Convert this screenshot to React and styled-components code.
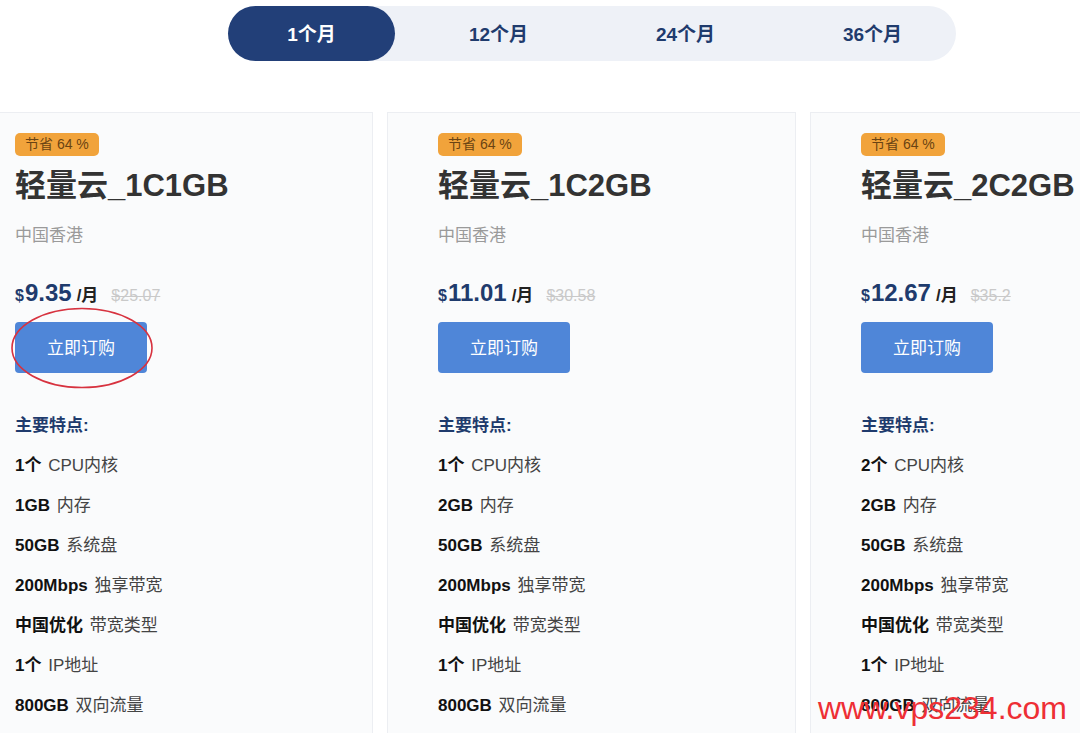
import React from "react";
import styled, { createGlobalStyle } from "styled-components";

const Global = createGlobalStyle`
  html, body { margin: 0; padding: 0; background: #ffffff; }
  body {
    font-family: "Liberation Sans", "Noto Sans CJK SC", sans-serif;
    overflow: hidden;
    width: 1080px;
    height: 733px;
  }
`;

const Page = styled.div`
  position: relative;
  width: 1080px;
  height: 733px;
  overflow: hidden;
  padding-top: 6px;
  box-sizing: border-box;
`;

const TabBar = styled.div`
  margin-left: 228px;
  width: 728px;
  height: 55px;
  border-radius: 28px;
  background: #eef1f7;
  display: flex;
  gap: 20px;
`;

const Tab = styled.div`
  width: 167px;
  height: 55px;
  box-sizing: border-box;
  padding-bottom: 3px;
  border-radius: 28px;
  display: flex;
  align-items: center;
  justify-content: center;
  font-size: 19px;
  font-weight: 700;
  color: ${(p) => (p.$active ? "#ffffff" : "#1f3b6d")};
  background: ${(p) => (p.$active ? "#223f78" : "transparent")};
`;

const CardRow = styled.div`
  margin-top: 51px;
  margin-left: -36px;
  display: flex;
  gap: 14px;
`;

const Card = styled.div`
  flex: 0 0 409px;
  box-sizing: border-box;
  height: 640px;
  background: #fafbfc;
  border: 1px solid #eceef2;
  padding: 20px 0 0 50px;
  display: flex;
  flex-direction: column;
  align-items: flex-start;
`;

const Badge = styled.div`
  height: 23px;
  padding: 0 10px;
  border-radius: 5px;
  background: #f1a33b;
  color: #6a4313;
  font-size: 14px;
  line-height: 23px;
  white-space: nowrap;
`;

const Title = styled.div`
  margin-top: 10px;
  font-size: 31px;
  line-height: 40px;
  font-weight: 700;
  color: #333333;
  white-space: nowrap;
`;

const Region = styled.div`
  margin-top: 18px;
  font-size: 17px;
  line-height: 24px;
  color: #9a9a9a;
`;

const PriceLine = styled.div`
  margin-top: 31px;
  height: 32px;
  display: flex;
  align-items: baseline;
  white-space: nowrap;
`;

const Currency = styled.span`
  font-size: 16px;
  font-weight: 700;
  color: #1f3b6d;
`;

const Amount = styled.span`
  font-size: 24px;
  font-weight: 700;
  color: #1f3b6d;
  margin-left: 1px;
`;

const Unit = styled.span`
  font-size: 17px;
  font-weight: 700;
  color: #222222;
  margin-left: 5px;
`;

const OldPrice = styled.span`
  font-size: 16px;
  color: #c9c9c9;
  text-decoration: line-through;
  margin-left: 13px;
`;

const ButtonWrap = styled.div`
  position: relative;
  margin-top: 11px;
`;

const BuyButton = styled.button`
  width: 132px;
  height: 51px;
  border: none;
  border-radius: 4px;
  background: #4f86d8;
  color: #ffffff;
  font-family: "Liberation Sans", "Noto Sans CJK SC", sans-serif;
  font-size: 17px;
  padding: 0 0 2px 0;
  cursor: pointer;
  display: block;
`;

const Circle = styled.svg`
  position: absolute;
  left: -5px;
  top: -15px;
  width: 144px;
  height: 82px;
  pointer-events: none;
  overflow: visible;
`;

const FeatureHead = styled.div`
  margin-top: 33px;
  font-size: 17px;
  line-height: 40px;
  font-weight: 700;
  color: #1f3b6d;
`;

const FeatureList = styled.ul`
  list-style: none;
  margin: 0;
  padding: 0;
`;

const Feature = styled.li`
  font-size: 17px;
  line-height: 40px;
  color: #444444;
  white-space: nowrap;
`;

const Strong = styled.b`
  color: #111111;
  font-weight: 700;
  margin-right: 2px;
`;

const Watermark = styled.div`
  position: absolute;
  left: 818px;
  top: 690px;
  font-family: "Liberation Sans", Arial, sans-serif;
  font-size: 32px;
  line-height: 37px;
  color: #ee2f35;
  white-space: nowrap;
  pointer-events: none;
`;

const plans = [
  {
    name: "轻量云_1C1GB",
    price: "9.35",
    old: "$25.07",
    cpu: "1个",
    ram: "1GB",
    circled: true,
  },
  {
    name: "轻量云_1C2GB",
    price: "11.01",
    old: "$30.58",
    cpu: "1个",
    ram: "2GB",
  },
  {
    name: "轻量云_2C2GB",
    price: "12.67",
    old: "$35.2",
    cpu: "2个",
    ram: "2GB",
  },
];

const tabs = ["1个月", "12个月", "24个月", "36个月"];

function PlanCard({ plan }) {
  const features = [
    [plan.cpu, "CPU内核"],
    [plan.ram, "内存"],
    ["50GB", "系统盘"],
    ["200Mbps", "独享带宽"],
    ["中国优化", "带宽类型"],
    ["1个", "IP地址"],
    ["800GB", "双向流量"],
  ];
  return (
    <Card>
      <Badge>节省 64 %</Badge>
      <Title>{plan.name}</Title>
      <Region>中国香港</Region>
      <PriceLine>
        <Currency>$</Currency>
        <Amount>{plan.price}</Amount>
        <Unit>/月</Unit>
        <OldPrice>{plan.old}</OldPrice>
      </PriceLine>
      <ButtonWrap>
        <BuyButton>立即订购</BuyButton>
        {plan.circled && (
          <Circle viewBox="0 0 144 82">
            <ellipse
              cx="72"
              cy="41"
              rx="70"
              ry="39.5"
              fill="none"
              stroke="#d7323f"
              strokeWidth="1.6"
            />
          </Circle>
        )}
      </ButtonWrap>
      <FeatureHead>主要特点:</FeatureHead>
      <FeatureList>
        {features.map(([b, t], i) => (
          <Feature key={i}>
            <Strong>{b}</Strong> {t}
          </Feature>
        ))}
      </FeatureList>
    </Card>
  );
}

export default function App() {
  return (
    <Page>
      <Global />
      <TabBar>
        {tabs.map((t, i) => (
          <Tab key={t} $active={i === 0}>
            {t}
          </Tab>
        ))}
      </TabBar>
      <CardRow>
        {plans.map((p) => (
          <PlanCard key={p.name} plan={p} />
        ))}
      </CardRow>
      <Watermark>www.vps234.com</Watermark>
    </Page>
  );
}
